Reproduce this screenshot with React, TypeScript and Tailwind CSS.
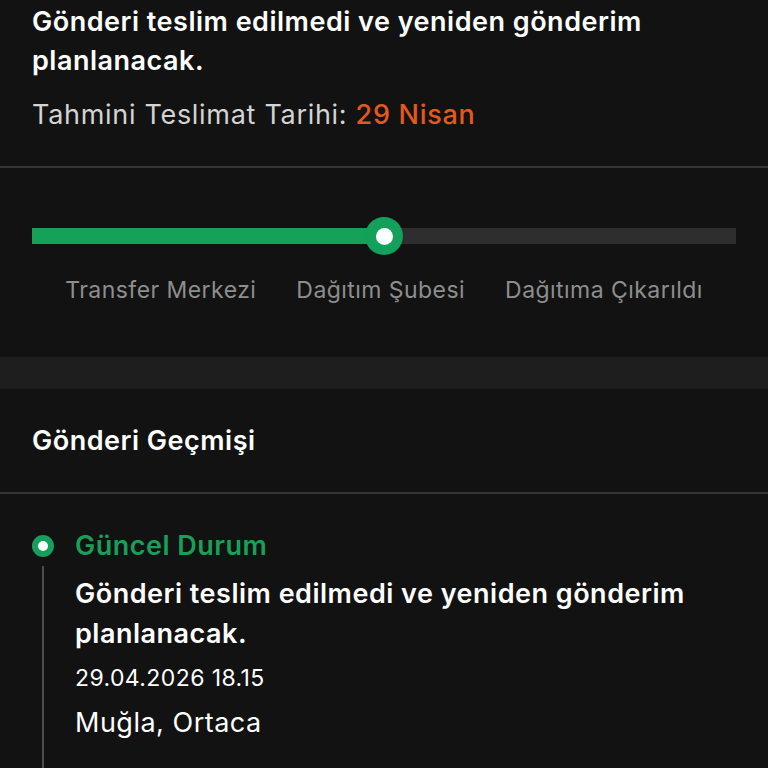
const font = { fontFamily: 'Inter, "Noto Sans", sans-serif' };

const steps = ['Transfer Merkezi', 'Dağıtım Şubesi', 'Dağıtıma Çıkarıldı'];

function Progress({ percent }: { percent: number }) {
  return (
    <div className="relative flex h-[36px] items-center">
      <div className="flex h-4 w-full bg-[#2e2e2e]">
        <div className="h-full bg-[#15a15a]" style={{ width: `${percent}%` }} />
      </div>
      <div
        className="absolute top-1/2 flex h-[38px] w-[38px] -translate-x-1/2 -translate-y-1/2 items-center justify-center rounded-full bg-[#12a05a]"
        style={{ left: `${percent}%` }}
      >
        <div className="h-[17px] w-[17px] rounded-full bg-white" />
      </div>
    </div>
  );
}

export default function App() {
  return (
    <div className="min-h-screen bg-[#121212] text-white" style={font}>
      <section className="px-8 pb-[32px] tracking-[0.5px]">
        <h1 className="pt-[2px] text-[27px] font-semibold leading-[39px]">
          Gönderi teslim edilmedi ve yeniden gönderim planlanacak.
        </h1>
        <p className="mt-[16px] text-[27px] leading-[38px] tracking-[0.7px] text-[#d4d4d4]">
          Tahmini Teslimat Tarihi: <span className="font-medium text-[#e4581f]">29 Nisan</span>
        </p>
      </section>
      <div className="h-[2px] bg-[#343434]" />

      <section className="px-8 pt-[50px] pb-[52px]">
        <Progress percent={50} />
        <div className="mt-[21px] flex justify-center gap-[40px] text-[23px] leading-[30px] tracking-[0.45px] text-[#8e8e8e]">
          {steps.map((s) => (
            <span key={s}>{s}</span>
          ))}
        </div>
      </section>

      <div className="h-8 bg-[#1e1e1e]" />

      <section className="px-8 pt-[34px] pb-[33px]">
        <h2 className="text-[27px] font-semibold leading-[36px] tracking-[0.5px]">Gönderi Geçmişi</h2>
      </section>
      <div className="h-[2px] bg-[#343434]" />

      <section className="flex px-8 pt-[33px] pb-10">
        <div className="flex w-[22px] flex-col items-center">
          <div className="flex h-[38px] items-center">
            <div className="flex h-[22px] w-[22px] items-center justify-center rounded-full bg-[#14a05a]">
              <div className="h-[10px] w-[10px] rounded-full bg-white" />
            </div>
          </div>
          <div className="mt-[1px] w-[2px] flex-1 bg-[#4d4d4d]" />
        </div>
        <div className="ml-[21px] flex-1 tracking-[0.5px]">
          <div className="text-[27px] font-semibold leading-[38px] text-[#1a9e5a]">Güncel Durum</div>
          <div className="mt-[9px] text-[27px] font-semibold leading-[40px]">
            Gönderi teslim edilmedi ve yeniden gönderim planlanacak.
          </div>
          <div className="mt-2 text-[23px] leading-[32px] tracking-[0.4px]">29.04.2026 18.15</div>
          <div className="mt-[10px] text-[27px] leading-[38px]">Muğla, Ortaca</div>
          <div className="h-10" />
        </div>
      </section>
    </div>
  );
}
